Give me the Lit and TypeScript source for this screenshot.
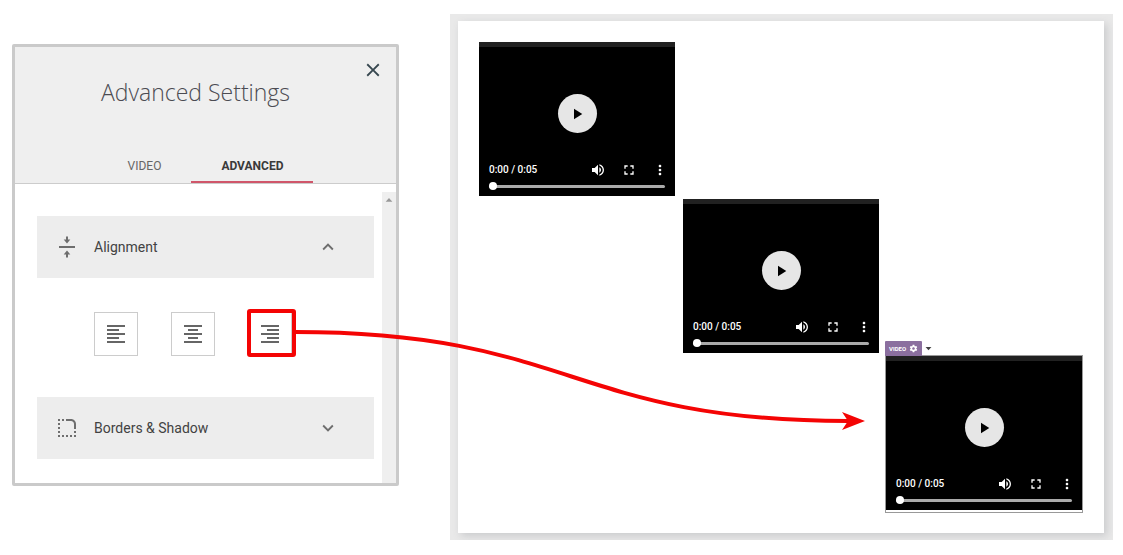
import { LitElement, html, css, svg } from "lit";
import { customElement, state } from "lit/decorators.js";
import { classMap } from "lit/directives/class-map.js";

const ICONS = {
  left: "M15 15H3v2h12v-2zm0-8H3v2h12V7zM3 13h18v-2H3v2zm0 8h18v-2H3v2zM3 3v2h18V3H3z",
  center: "M7 15v2h10v-2H7zm-4 6h18v-2H3v2zm0-8h18v-2H3v2zm4-6v2h10V7H7zM3 3v2h18V3H3z",
  right: "M3 21h18v-2H3v2zm6-4h12v-2H9v2zm-6-4h18v-2H3v2zm6-4h12V7H9v2zM3 3v2h18V3H3z",
  alignment: "M11 22.5h2v-3h2.3L12 15.5l-3.3 4H11v3zM13 1.5h-2v3H8.7l3.3 4 3.3-4H13v-3zM4 11v2h16v-2H4z",
  borders:
    "M19 19h2v2h-2v-2zm0-2h2v-2h-2v2zM3 13h2v-2H3v2zm0 4h2v-2H3v2zm0-8h2V7H3v2zm0-4h2V3H3v2zm4 0h2V3H7v2zm8 16h2v-2h-2v2zm-4 0h2v-2h-2v2zm-4 0h2v-2H7v2zm-4 0h2v-2H3v2zM21 8c0-2.76-2.24-5-5-5h-5v2h5c1.65 0 3 1.35 3 3v5h2V8z",
  up: "M12 8l-6 6 1.41 1.41L12 10.83l4.59 4.58L18 14z",
  down: "M16.59 8.59L12 13.17 7.41 8.59 6 10l6 6 6-6z",
  close: "M19 6.41L17.59 5 12 10.59 6.41 5 5 6.41 10.59 12 5 17.59 6.41 19 12 13.41 17.59 19 19 17.59 13.41 12z",
  play: "M8 5v14l11-7z",
  volume:
    "M3 9v6h4l5 5V4L7 9H3zm13.5 3c0-1.77-1.02-3.29-2.5-4.03v8.05c1.48-.73 2.5-2.25 2.5-4.02zM14 3.23v2.06c2.89.86 5 3.54 5 6.71s-2.11 5.85-5 6.71v2.06c4.01-.91 7-4.49 7-8.77s-2.99-7.86-7-8.77z",
  fullscreen: "M7 14H5v5h5v-2H7v-3zm-2-4h2V7h3V5H5v5zm12 7h-3v2h5v-5h-2v3zM14 5v2h3v3h2V5h-5z",
  more: "M12 8c1.1 0 2-.9 2-2s-.9-2-2-2-2 .9-2 2 .9 2 2 2zm0 2c-1.1 0-2 .9-2 2s.9 2 2 2 2-.9 2-2-.9-2-2-2zm0 6c-1.1 0-2 .9-2 2s.9 2 2 2 2-.9 2-2-.9-2-2-2z",
  gear: "M19.43 12.98c.04-.32.07-.64.07-.98s-.03-.66-.07-.98l2.11-1.65c.19-.15.24-.42.12-.64l-2-3.46c-.12-.22-.39-.3-.61-.22l-2.49 1c-.52-.4-1.08-.73-1.69-.98l-.38-2.65C14.46 2.18 14.25 2 14 2h-4c-.25 0-.46.18-.49.42l-.38 2.65c-.61.25-1.17.59-1.69.98l-2.49-1c-.23-.09-.49 0-.61.22l-2 3.46c-.13.22-.07.49.12.64l2.11 1.65c-.04.32-.07.65-.07.98s.03.66.07.98l-2.11 1.65c-.19.15-.24.42-.12.64l2 3.46c.12.22.39.3.61.22l2.49-1c.52.4 1.08.73 1.69.98l.38 2.65c.03.24.24.42.49.42h4c.25 0 .46-.18.49-.42l.38-2.65c.61-.25 1.17-.59 1.69-.98l2.49 1c.23.09.49 0 .61-.22l2-3.46c.12-.22.07-.49-.12-.64l-2.11-1.65zM12 15.5c-1.93 0-3.5-1.57-3.5-3.5s1.57-3.5 3.5-3.5 3.5 1.57 3.5 3.5-1.57 3.5-3.5 3.5z",
  caret: "M2 7h20L12 18z",
} as const;

type IconName = keyof typeof ICONS;

const icon = (name: IconName, size: number) => html`
  <svg class="icon" width=${size} height=${size} viewBox="0 0 24 24" aria-hidden="true">
    <path d=${ICONS[name]}></path>
  </svg>
`;

@customElement("video-card")
export class VideoCard extends LitElement {
  static styles = css`
    :host {
      display: block;
      width: 196px;
      background: #000;
      color: #fff;
      font-family: Roboto, sans-serif;
    }
    .strip {
      height: 5px;
      background: #212121;
    }
    button {
      display: grid;
      place-items: center;
      padding: 0;
      border: 0;
      background: none;
      color: inherit;
    }
    .icon {
      display: block;
      fill: currentColor;
    }
    .play {
      width: 39px;
      height: 39px;
      margin: 47px auto 29px;
      border-radius: 50%;
      background: #e6e6e6;
      color: #000;
    }
    .controls {
      display: flex;
      align-items: center;
      gap: 15px;
      height: 16px;
      padding: 0 7px 0 10px;
    }
    .time {
      margin-right: auto;
      font-size: 10px;
      font-weight: 500;
      line-height: 16px;
      white-space: nowrap;
    }
    .seek {
      display: block;
      width: calc(100% - 20px);
      height: 8px;
      margin: 4px 10px 0;
      padding-bottom: 6px;
      appearance: none;
      background: none;
    }
    .seek::-webkit-slider-runnable-track {
      height: 3px;
      border-radius: 2px;
      background: #aaa;
    }
    .seek::-webkit-slider-thumb {
      appearance: none;
      width: 8px;
      height: 8px;
      margin-top: -3px;
      border-radius: 50%;
      background: #fff;
    }
  `;

  render() {
    return html`
      <div class="strip"></div>
      <button class="play" aria-label="Play">${icon("play", 18)}</button>
      <div class="controls">
        <span class="time">0:00 / 0:05</span>
        <button aria-label="Mute">${icon("volume", 16)}</button>
        <button aria-label="Full screen">${icon("fullscreen", 16)}</button>
        <button aria-label="More options">${icon("more", 16)}</button>
      </div>
      <input class="seek" type="range" min="0" max="5" value="0" aria-label="Seek" />
    `;
  }
}

@customElement("app-root")
export class AppRoot extends LitElement {
  static styles = css`
    :host {
      display: block;
      position: relative;
      box-sizing: border-box;
      min-height: 100vh;
      background: #fff;
      color: #424242;
      font-family: Roboto, sans-serif;
    }
    * {
      box-sizing: border-box;
    }
    .layout {
      display: flex;
      align-items: flex-start;
      gap: 51px;
      padding: 14px 10px 15px 12px;
    }
    button {
      padding: 0;
      border: 0;
      background: none;
      color: inherit;
      font: inherit;
    }
    .icon {
      display: block;
      flex: none;
      fill: currentColor;
    }

    .panel {
      flex: none;
      width: 387px;
      margin-top: 30px;
      border: 3px solid #cacaca;
      border-radius: 2px;
      background: #fff;
    }
    .header {
      position: relative;
      padding-top: 27px;
      border-bottom: 1px solid #ccc;
      background: #efefef;
    }
    .title {
      margin: 0 20px 42px 0;
      font: 300 23px/36px "Open Sans", sans-serif;
      text-align: center;
      color: #4b4b52;
    }
    .close {
      position: absolute;
      top: 12px;
      right: 12px;
      color: #37474f;
    }
    .tabs {
      display: flex;
      justify-content: center;
    }
    .tab {
      height: 31px;
      padding: 0 30px;
      border-bottom: 2px solid transparent;
      font-size: 12px;
      line-height: 29px;
      color: #666;
    }
    .tab.active {
      border-bottom-color: #d0566a;
      font-weight: 700;
      color: #3a3a3a;
    }
    .body {
      display: flex;
      gap: 8px;
    }
    .sections {
      flex: 1;
      padding: 32px 0 24px 22px;
    }
    .section {
      display: flex;
      align-items: center;
      gap: 15px;
      width: 100%;
      height: 62px;
      padding: 0 35px 1px 18px;
      background: #ededed;
      font-size: 14px;
      line-height: 20px;
      text-align: left;
    }
    .section .icon {
      color: #6e6e6e;
    }
    .label {
      flex: 1;
    }
    .options {
      display: flex;
      gap: 33px;
      padding: 34px 0 41px 57px;
    }
    .option {
      position: relative;
      display: grid;
      place-items: center;
      width: 44px;
      height: 44px;
      border: 1px solid #ccc;
      color: #666;
    }
    .option.chosen::after {
      content: "";
      position: absolute;
      inset: -4px -5px -2px -2px;
      border: 4px solid #f40404;
      border-radius: 3px;
    }
    .scrollbar {
      width: 14px;
      margin-top: 8px;
      padding-top: 4px;
      background: #efefef;
      color: #999;
    }
    .scrollbar .icon {
      margin: 0 auto;
      transform: rotate(180deg);
    }

    .canvas {
      flex: 1;
      min-width: 0;
      padding: 7px 9px 7px 8px;
      overflow: hidden;
      background: #e9e9e9;
    }
    .page {
      display: flex;
      flex-direction: column;
      gap: 3px;
      padding: 21px 21px 20px;
      background: #fff;
      box-shadow: 3px 3px 8px rgba(90, 95, 105, 0.22);
    }
    .middle {
      align-self: center;
    }
    .selected {
      position: relative;
      align-self: flex-end;
      margin-top: -1px;
      padding-bottom: 2px;
      border: 1px solid #999;
    }
    .tag {
      position: absolute;
      bottom: 100%;
      left: -1px;
      display: flex;
      align-items: center;
      gap: 3px;
    }
    .tag-name {
      display: flex;
      align-items: center;
      gap: 3px;
      height: 15px;
      padding: 0 4px;
      border-radius: 1px 1px 0 0;
      background: #8b6f9f;
      color: #fff;
      font-size: 6px;
      font-weight: 700;
    }
    .arrow {
      position: absolute;
      inset: 0;
      width: 100%;
      height: 100%;
      pointer-events: none;
    }
    .line {
      fill: none;
      stroke: #f40404;
      stroke-width: 4;
    }
    .head {
      fill: #f40404;
    }
  `;

  @state() private link = { x1: 0, y1: 0, x2: 0, y2: 0 };

  private observer = new ResizeObserver(() => this.measure());

  connectedCallback() {
    super.connectedCallback();
    this.observer.observe(this);
  }

  disconnectedCallback() {
    this.observer.disconnect();
    super.disconnectedCallback();
  }

  firstUpdated() {
    this.measure();
  }

  private measure() {
    const from = this.renderRoot.querySelector(".chosen")?.getBoundingClientRect();
    const to = this.renderRoot.querySelector(".selected")?.getBoundingClientRect();
    if (!from || !to) return;
    const own = this.getBoundingClientRect();
    this.link = {
      x1: Math.round(from.right + 3 - own.left),
      y1: Math.round(from.top + 20 - own.top),
      x2: Math.round(to.left - 20 - own.left),
      y2: Math.round(to.top + 66 - own.top),
    };
  }

  private renderArrow() {
    const { x1, y1, x2, y2 } = this.link;
    const end = x2 - 17;
    const half = (end - x1) / 2;
    return svg`
      <path class="line" d=${`M${x1} ${y1}C${x1 + half} ${y1} ${end - half} ${y2} ${end} ${y2}`}></path>
      <path class="head" d=${`M${x2} ${y2}l-23 -9l6 9l-6 9z`}></path>
    `;
  }

  private renderSection(name: IconName, label: string, open: boolean) {
    return html`
      <button class="section" aria-expanded=${open ? "true" : "false"}>
        ${icon(name, 24)}
        <span class="label">${label}</span>
        ${icon(open ? "up" : "down", 22)}
      </button>
    `;
  }

  private renderOption(name: IconName, chosen = false) {
    return html`
      <button class=${classMap({ option: true, chosen })} aria-label=${`Align ${name}`}>
        ${icon(name, 24)}
      </button>
    `;
  }

  render() {
    return html`
      <div class="layout">
        <section class="panel">
          <header class="header">
            <h1 class="title">Advanced Settings</h1>
            <button class="close" aria-label="Close">${icon("close", 22)}</button>
            <div class="tabs" role="tablist">
              <button class="tab" role="tab" aria-selected="false">VIDEO</button>
              <button class="tab active" role="tab" aria-selected="true">ADVANCED</button>
            </div>
          </header>
          <div class="body">
            <div class="sections">
              ${this.renderSection("alignment", "Alignment", true)}
              <div class="options">
                ${this.renderOption("left")} ${this.renderOption("center")}
                ${this.renderOption("right", true)}
              </div>
              ${this.renderSection("borders", "Borders & Shadow", false)}
            </div>
            <div class="scrollbar">${icon("caret", 8)}</div>
          </div>
        </section>
        <main class="canvas">
          <div class="page">
            <video-card></video-card>
            <video-card class="middle"></video-card>
            <div class="selected">
              <div class="tag">
                <button class="tag-name">VIDEO ${icon("gear", 9)}</button>
                <button aria-label="Video menu">${icon("caret", 7)}</button>
              </div>
              <video-card></video-card>
            </div>
          </div>
        </main>
      </div>
      <svg class="arrow" aria-hidden="true">${this.renderArrow()}</svg>
    `;
  }
}
